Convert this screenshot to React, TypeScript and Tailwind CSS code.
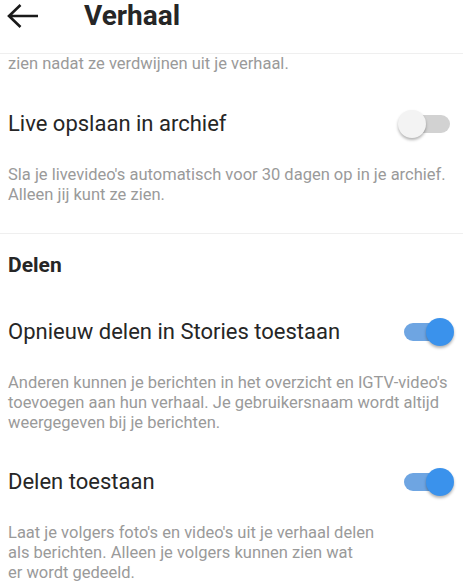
import { FC } from 'react'

type ToggleProps = { on: boolean }

const Toggle: FC<ToggleProps> = ({ on }) => {
  return (
    <div className="relative h-7 w-[56px] shrink-0">
      <div
        className={
          on
            ? 'absolute top-[5px] right-[3px] left-[6px] h-[18px] rounded-full bg-[#6ea5e2]'
            : 'absolute top-[5px] right-[4px] left-[6px] h-[18px] rounded-full bg-[#d2d2d2]'
        }
      />
      <div
        className={
          on
            ? 'absolute top-0 right-0 h-7 w-7 rounded-full bg-[#3a92ec] shadow-[0_2px_3px_rgba(0,0,0,0.3)]'
            : 'absolute top-0 left-0 h-7 w-7 rounded-full bg-[#f3f3f3] shadow-[0_2px_3px_rgba(0,0,0,0.3)]'
        }
      />
    </div>
  )
}

type SettingProps = {
  title: string,
  lines: string[],
  on: boolean,
  top: string,
}

const Setting: FC<SettingProps> = ({ title, lines, on, top }) => {
  return (
    <div className={top}>
      <div className="flex h-7 items-center justify-between pr-[9px] pl-2">
        <span className="text-[22px] leading-7 text-[#262626]">{title}</span>
        <Toggle on={on} />
      </div>
      <div className="mt-[27px] pl-2 text-[16.5px] leading-5 text-[#9a9a9a]">
        {lines.map((l) => (
          <p key={l}>{l}</p>
        ))}
      </div>
    </div>
  )
}

const App: FC = () => {
  return (
    <div className="h-[586px] w-[463px] overflow-hidden bg-white font-['Roboto',sans-serif]">
      <header className="h-[54px] border-b border-[#efefef]">
        <div className="flex h-8 items-center">
          <svg width="40" height="32" viewBox="0 0 40 32" className="shrink-0">
            <path d="M9 16 H38 M20.5 5 L9 16 L20.5 27" fill="none" stroke="#1a1a1a" strokeWidth="2.6" />
          </svg>
          <h1 className="ml-[44px] text-[28px] leading-8 font-bold text-[#262626]">Verhaal</h1>
        </div>
      </header>

      <p className="pl-2 text-[16.5px] leading-5 text-[#9a9a9a]">zien nadat ze verdwijnen uit je verhaal.</p>

      <div className="border-b border-[#efefef] pb-[28px]">
        <Setting
          top="pt-9"
          title="Live opslaan in archief"
          on={false}
          lines={["Sla je livevideo's automatisch voor 30 dagen op in je archief.", 'Alleen jij kunt ze zien.']}
        />
      </div>

      <h2 className="pt-[17px] pl-2 text-[21px] leading-7 font-bold text-[#262626]">Delen</h2>

      <Setting
        top="pt-[39px]"
        title="Opnieuw delen in Stories toestaan"
        on={true}
        lines={[
          "Anderen kunnen je berichten in het overzicht en IGTV-video's",
          'toevoegen aan hun verhaal. Je gebruikersnaam wordt altijd',
          'weergegeven bij je berichten.',
        ]}
      />

      <Setting
        top="pt-[35px]"
        title="Delen toestaan"
        on={true}
        lines={[
          "Laat je volgers foto's en video's uit je verhaal delen",
          'als berichten. Alleen je volgers kunnen zien wat',
          'er wordt gedeeld.',
        ]}
      />
    </div>
  )
}

export default App
